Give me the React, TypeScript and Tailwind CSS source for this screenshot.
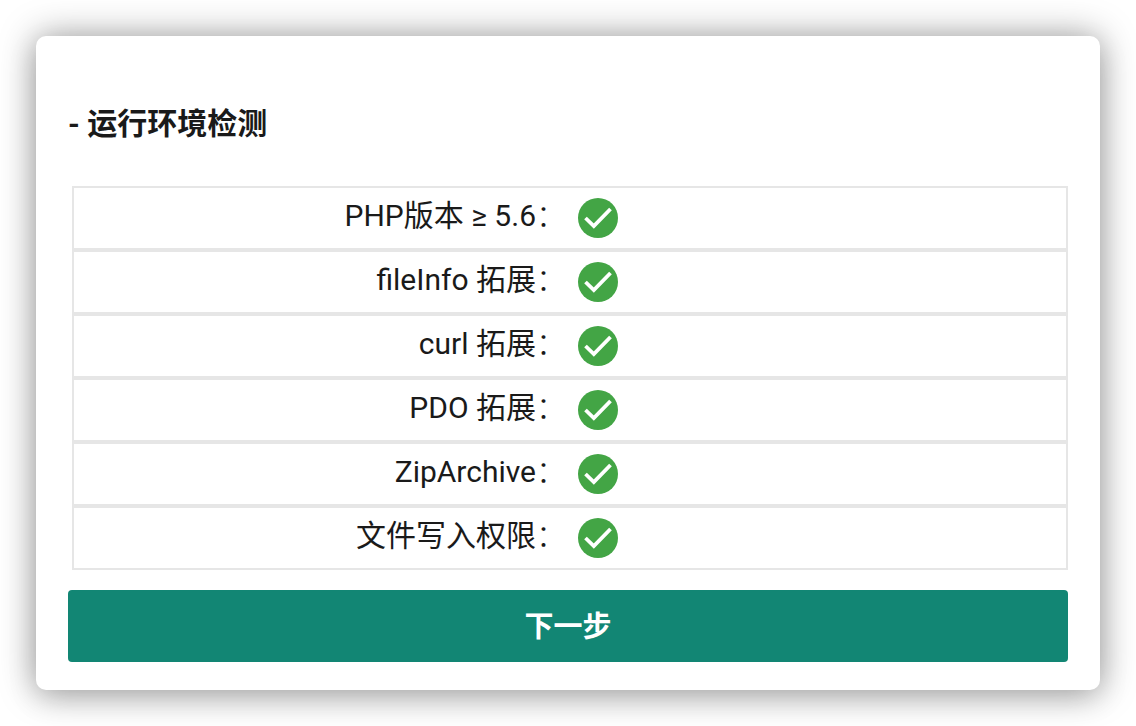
const rows = ["PHP版本 ≥ 5.6", "fileInfo 拓展", "curl 拓展", "PDO 拓展", "ZipArchive", "文件写入权限"];

function Check() {
  return (
    <svg width="40" height="40" viewBox="0 0 40 40" className="block shrink-0">
      <circle cx="20" cy="20" r="20" fill="#43a545" />
      <path d="M7.5 20 L15.8 28 L32.5 11" fill="none" stroke="#fff" strokeWidth="3.8" />
    </svg>
  );
}

export default function App() {
  return (
    <div className="w-[1136px] h-[726px] p-[36px] bg-white overflow-hidden font-['Roboto','Noto_Sans_CJK_SC',sans-serif] text-[#1a1a1a]">
      <div className="w-[1064px] h-[654px] bg-white rounded-[10px] shadow-[0_0_36px_rgba(0,0,0,0.38),0_10px_30px_rgba(0,0,0,0.12)] pt-[64px] px-[32px]">
        <h1 className="h-[48px] text-[30px] leading-[48px] font-bold">- 运行环境检测</h1>
        <div className="mt-[38px] ml-[4px] flex flex-col">
          {rows.map((r) => (
            <div key={r} className="h-[64px] border-2 border-[#e6e6e6] flex items-center">
              <div className="w-[492px] text-right text-[30px] leading-[40px] -mt-[5px] flex justify-end">
                <span>{r}</span>
                <span className="font-light">：</span>
              </div>
              <div className="ml-[12px]"><Check /></div>
            </div>
          ))}
        </div>
        <button className="mt-[20px] w-[1000px] h-[72px] pt-[3px] bg-[#128674] rounded-[4px] text-white text-[29px] font-bold block">下一步</button>
      </div>
    </div>
  );
}
